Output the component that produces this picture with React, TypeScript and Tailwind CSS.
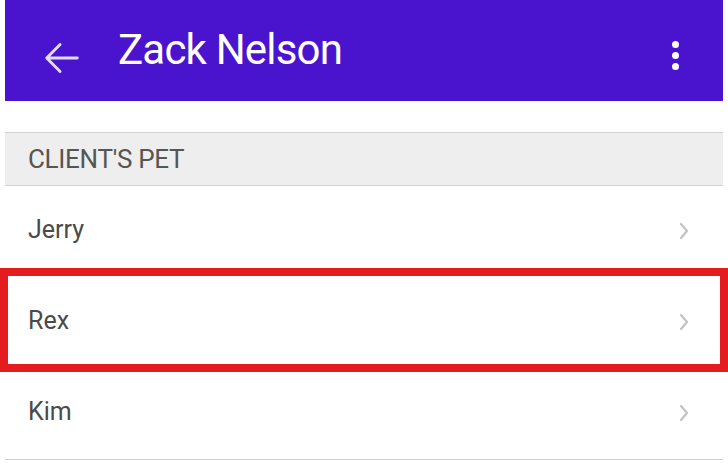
import React from 'react'

const pets = ['Jerry', 'Rex', 'Kim']

function Chevron() {
  return (
    <svg width="12" height="20" viewBox="0 0 12 20" fill="none">
      <polyline points="3,3 9,10 3,17" stroke="#c2c2c2" strokeWidth="2.2" strokeLinecap="round" strokeLinejoin="round" />
    </svg>
  )
}

export default function App() {
  return (
    <div className="relative w-[728px] h-[468px] bg-white overflow-hidden font-['Roboto',sans-serif]">
      <div className="mx-[5px]">
        {/* header */}
        <div className="h-[101px] bg-[#4a14cf] flex items-center">
          <svg className="ml-[34px] mt-[14px]" width="46" height="46" viewBox="0 0 24 24" fill="none">
            <path d="M20 12H4.5M11 5l-7 7 7 7" stroke="#e2dbfa" strokeWidth="1.5" strokeLinecap="round" strokeLinejoin="round" />
          </svg>
          <h1 className="ml-[33px] text-[42px] leading-none text-white tracking-[-0.8px] -mt-[1px]">Zack Nelson</h1>
          <div className="ml-auto mr-[44px] mt-[10px] flex flex-col gap-[4px]">
            <span className="w-[7px] h-[7px] rounded-full bg-white" />
            <span className="w-[7px] h-[7px] rounded-full bg-white" />
            <span className="w-[7px] h-[7px] rounded-full bg-white" />
          </div>
        </div>

        {/* section */}
        <div className="mt-[31px] h-[54px] bg-[#eeeeee] border-y border-[#d2d2d2] flex items-center pl-[23px]">
          <span className="text-[26px] text-[#555555] tracking-[-0.3px]">CLIENT'S PET</span>
        </div>

        <div className="border-b border-[#cfcfcf]">
          {pets.map((name) => (
            <div key={name} className="h-[91px] flex items-center pl-[23px] pr-[33px]">
              <span className="text-[25px] text-[#4a4a4a] -mt-[4px]">{name}</span>
              <div className="ml-auto -mt-[2px]">
                <Chevron />
              </div>
            </div>
          ))}
        </div>
      </div>

      {/* highlight */}
      <div className="absolute left-0 top-[268px] w-[728px] h-[104px] border-[8px] border-[#e41c1f]" />
    </div>
  )
}
